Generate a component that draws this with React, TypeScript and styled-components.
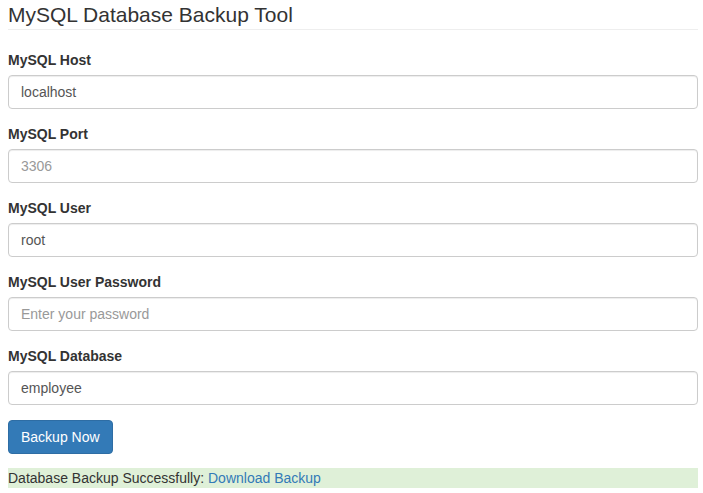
import styled, { createGlobalStyle } from "styled-components";

const GlobalStyle = createGlobalStyle`
  * {
    box-sizing: border-box;
  }
  body {
    margin: 0;
    background: #fff;
    font-family: "Liberation Sans", Arial, sans-serif;
    font-size: 14px;
    line-height: 20px;
    color: #333;
  }
`;

const Page = styled.div`
  width: 690px;
  margin-left: 8px;
`;

const Title = styled.h3`
  margin: 0 0 20px;
  padding: 3px 0 3px;
  font-size: 21px;
  font-weight: normal;
  line-height: 23px;
  color: #333;
  border-bottom: 1px solid #eee;
`;

const Group = styled.div`
  margin-bottom: 15px;
`;

const Label = styled.label`
  display: block;
  margin-bottom: 5px;
  font-weight: bold;
  font-size: 14px;
  line-height: 20px;
`;

const Input = styled.input`
  display: block;
  width: 100%;
  height: 34px;
  padding: 6px 12px;
  font-family: inherit;
  font-size: 14px;
  line-height: 20px;
  color: #555;
  background: #fff;
  border: 1px solid #ccc;
  border-radius: 4px;
  box-shadow: inset 0 1px 1px rgba(0, 0, 0, 0.075);
  outline: none;

  &::placeholder {
    color: #999;
  }
`;

const Button = styled.button`
  display: inline-block;
  height: 34px;
  padding: 6px 12px;
  font-family: inherit;
  font-size: 14px;
  line-height: 20px;
  color: #fff;
  background: #337ab7;
  border: 1px solid #2e6da4;
  border-radius: 4px;
  cursor: pointer;
`;

const Result = styled.div`
  margin-top: 14px;
  background: #dff0d8;
  line-height: 20px;
  color: #333;
`;

const Link = styled.a`
  color: #337ab7;
  text-decoration: none;
`;

const fields = [
  { label: "MySQL Host", value: "localhost" },
  { label: "MySQL Port", placeholder: "3306" },
  { label: "MySQL User", value: "root" },
  { label: "MySQL User Password", placeholder: "Enter your password", type: "password" },
  { label: "MySQL Database", value: "employee" },
];

export default function App() {
  return (
    <Page>
      <GlobalStyle />
      <Title>MySQL Database Backup Tool</Title>
      <form onSubmit={(e) => e.preventDefault()}>
        {fields.map((f) => (
          <Group key={f.label}>
            <Label>{f.label}</Label>
            <Input
              type={f.type || "text"}
              defaultValue={f.value}
              placeholder={f.placeholder}
            />
          </Group>
        ))}
        <Button type="submit">Backup Now</Button>
      </form>
      <Result>
        Database Backup Successfully: <Link href="#">Download Backup</Link>
      </Result>
    </Page>
  );
}
